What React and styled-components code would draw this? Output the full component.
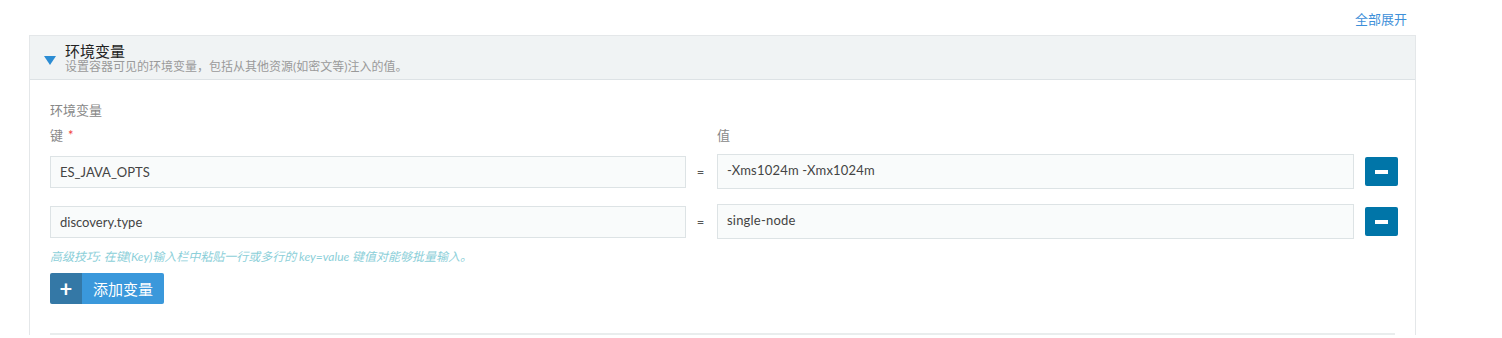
import React from "react"
import styled, { createGlobalStyle } from "styled-components"

const GlobalStyle = createGlobalStyle`
  body {
    margin: 0;
    background: #fff;
    font-family: Lato, "Noto Sans CJK SC", sans-serif;
    color: #333;
  }
`

const Page = styled.div`
  padding: 10px 0 0 29px;
  width: 1387px;
`

const TopBar = styled.div`
  display: flex;
  justify-content: flex-end;
  padding-right: 9px;
  height: 25px;
`

const Link = styled.a`
  color: #3d8fd9;
  font-size: 13px;
  line-height: 18px;
  cursor: pointer;
`

const Panel = styled.section`
  border: 1px solid #e4e7e9;
  border-bottom: none;
`

const Header = styled.div`
  display: flex;
  align-items: center;
  gap: 9px;
  height: 43px;
  padding-left: 14px;
  background: #f0f3f4;
  border-bottom: 1px solid #dde2e5;
`

const Caret = styled.span`
  width: 0;
  height: 0;
  margin-top: 5px;
  border-left: 6px solid transparent;
  border-right: 6px solid transparent;
  border-top: 9px solid #2c8cd3;
`

const HeaderText = styled.div`
  display: flex;
  flex-direction: column;
`

const Title = styled.div`
  font-size: 15px;
  line-height: 18px;
  color: #222;
`

const Subtitle = styled.div`
  font-size: 12px;
  line-height: 14px;
  color: #9a9a9a;
`

const Body = styled.div`
  padding: 21px 20px 0 20px;
`

const Label = styled.div`
  font-size: 13px;
  line-height: 18px;
  color: #888;
`

const Grid = styled.div`
  display: grid;
  grid-template-columns: 636px 31px 637px 44px;
  align-items: center;
  row-gap: 15px;
  margin-top: 7px;
`

const Required = styled.span`
  color: #f03b3b;
  margin-left: 5px;
`

const ColLabel = styled(Label)`
  grid-column: ${p => p.$col};
  margin-bottom: -5px;
`

const KeyInput = styled.div`
  grid-column: 1;
  box-sizing: border-box;
  height: 32px;
  padding: 0 9px;
  display: flex;
  align-items: center;
  background: #f9fbfb;
  border: 1px solid #dde3e5;
  font-size: 13px;
  color: #444;
`

const Eq = styled.div`
  text-align: center;
  font-size: 13px;
  color: #555;
  padding-right: 2px;
`

const ValueInput = styled.div`
  box-sizing: border-box;
  height: 35px;
  padding: 6px 9px;
  background: #f9fbfb;
  border: 1px solid #dde3e5;
  font-size: 13px;
  line-height: 18px;
  color: #444;
  white-space: nowrap;
  letter-spacing: 0.2px;
`

const RemoveButton = styled.button`
  justify-self: end;
  width: 33px;
  height: 29px;
  border: none;
  border-radius: 2px;
  background: #0075a8;
  display: flex;
  align-items: center;
  justify-content: center;
  padding: 0;
  cursor: pointer;

  &::before {
    content: "";
    width: 13px;
    height: 4px;
    background: #fff;
  }
`

const Hint = styled.div`
  margin-top: 10px;
  font-size: 12px;
  line-height: 16px;
  font-style: italic;
  color: #8ccfd9;
`

const AddButton = styled.button`
  margin-top: 8px;
  display: flex;
  height: 31px;
  padding: 0;
  border: none;
  border-radius: 2px;
  overflow: hidden;
  cursor: pointer;
  font-family: inherit;
`

const AddIcon = styled.span`
  width: 32px;
  background: #3478a6;
  color: #fff;
  font-size: 22px;
  font-weight: 700;
  display: flex;
  align-items: center;
  justify-content: center;
`

const AddLabel = styled.span`
  background: #3a98db;
  color: #fff;
  font-size: 15px;
  padding: 0 11px;
  display: flex;
  align-items: center;
`

const Divider = styled.div`
  margin-top: 29px;
  height: 2px;
  background: #e9eded;
`

const rows = [
  { key: "ES_JAVA_OPTS", value: "-Xms1024m -Xmx1024m" },
  { key: "discovery.type", value: "single-node" },
]

export default function App() {
  return (
    <>
      <GlobalStyle />
      <Page>
        <TopBar>
          <Link>全部展开</Link>
        </TopBar>
        <Panel>
          <Header>
            <Caret />
            <HeaderText>
              <Title>环境变量</Title>
              <Subtitle>设置容器可见的环境变量，包括从其他资源(如密文等)注入的值。</Subtitle>
            </HeaderText>
          </Header>
          <Body>
            <Label>环境变量</Label>
            <Grid>
              <ColLabel $col="1">
                键<Required>*</Required>
              </ColLabel>
              <ColLabel $col="3 / -1">值</ColLabel>
              {rows.map(r => (
                <React.Fragment key={r.key}>
                  <KeyInput>{r.key}</KeyInput>
                  <Eq>=</Eq>
                  <ValueInput>{r.value}</ValueInput>
                  <RemoveButton aria-label="remove" />
                </React.Fragment>
              ))}
            </Grid>
            <Hint>高级技巧: 在键(Key)输入栏中粘贴一行或多行的 key=value 键值对能够批量输入。</Hint>
            <AddButton>
              <AddIcon>+</AddIcon>
              <AddLabel>添加变量</AddLabel>
            </AddButton>
            <Divider />
          </Body>
        </Panel>
      </Page>
    </>
  )
}
